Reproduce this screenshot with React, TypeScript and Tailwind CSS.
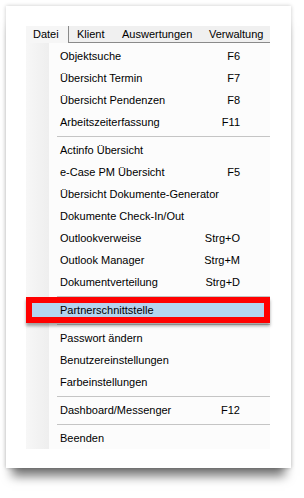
import React from "react";

type Entry =
  | { kind: "item"; label: string; shortcut?: string; active?: boolean }
  | { kind: "sep" };

const entries: Entry[] = [
  { kind: "item", label: "Objektsuche", shortcut: "F6" },
  { kind: "item", label: "Übersicht Termin", shortcut: "F7" },
  { kind: "item", label: "Übersicht Pendenzen", shortcut: "F8" },
  { kind: "item", label: "Arbeitszeiterfassung", shortcut: "F11" },
  { kind: "sep" },
  { kind: "item", label: "Actinfo Übersicht" },
  { kind: "item", label: "e-Case PM Übersicht", shortcut: "F5" },
  { kind: "item", label: "Übersicht Dokumente-Generator" },
  { kind: "item", label: "Dokumente Check-In/Out" },
  { kind: "item", label: "Outlookverweise", shortcut: "Strg+O" },
  { kind: "item", label: "Outlook Manager", shortcut: "Strg+M" },
  { kind: "item", label: "Dokumentverteilung", shortcut: "Strg+D" },
  { kind: "sep" },
  { kind: "item", label: "Partnerschnittstelle", active: true },
  { kind: "sep" },
  { kind: "item", label: "Passwort ändern" },
  { kind: "item", label: "Benutzereinstellungen" },
  { kind: "item", label: "Farbeinstellungen" },
  { kind: "sep" },
  { kind: "item", label: "Dashboard/Messenger", shortcut: "F12" },
  { kind: "sep" },
  { kind: "item", label: "Beenden" },
];

const MenuRow: React.FC<{ label: string; shortcut?: string; active?: boolean }> = ({
  label,
  shortcut,
  active,
}) => (
  <div className="relative h-[22px] flex items-center pl-[34px] pr-[30px]">
    {/* highlight annotation */}
    {active && (
      <div className="absolute -top-[2px] -bottom-[2px] left-0 right-0 border-[6px] border-[#ff0000] bg-[#b4d4ef] shadow-[0_3px_3px_rgba(0,0,0,0.35)]" />
    )}
    <span className="relative flex-1">{label}</span>
    {shortcut && <span className="relative">{shortcut}</span>}
  </div>
);

export default function App() {
  return (
    <div className="w-[304px] h-[498px] bg-white pt-[6px] pl-[6px] font-['Liberation_Sans',Arial,sans-serif] text-[11px] text-black">
      <div className="w-[285px] h-[462px] bg-white pt-[20px] pl-[20px] shadow-[0_14px_10px_-6px_rgba(0,0,0,0.55),0_0_4px_rgba(0,0,0,0.22)]">
        <div className="w-[244px]">
          {/* menu bar */}
          <div className="flex h-[17px] bg-[#f0f0f0]">
            <div className="w-[43px] pl-[7px] bg-[#f6f6f6] border-r border-[#8a8a8a] flex items-center">
              Datei
            </div>
            <div className="flex flex-1 border-b border-[#8a8a8a] items-center">
              <div className="w-[43px] pl-[8px]">Klient</div>
              <div className="w-[87px] pl-[10px]">Auswertungen</div>
              <div className="flex-1 pl-[10px]">Verwaltung</div>
            </div>
          </div>

          {/* dropdown */}
          <div className="pt-[2px] bg-[linear-gradient(to_right,#f7f7f7_0px,#eeeeee_23px,#fcfcfc_23px)]">
            {entries.map((e, i) =>
              e.kind === "sep" ? (
                <div key={i} className="h-[6px] flex items-center pl-[31px]">
                  <div className="h-px w-full bg-[#c5c5c5]" />
                </div>
              ) : (
                <MenuRow key={i} label={e.label} shortcut={e.shortcut} active={e.active} />
              )
            )}
          </div>
        </div>
      </div>
    </div>
  );
}
